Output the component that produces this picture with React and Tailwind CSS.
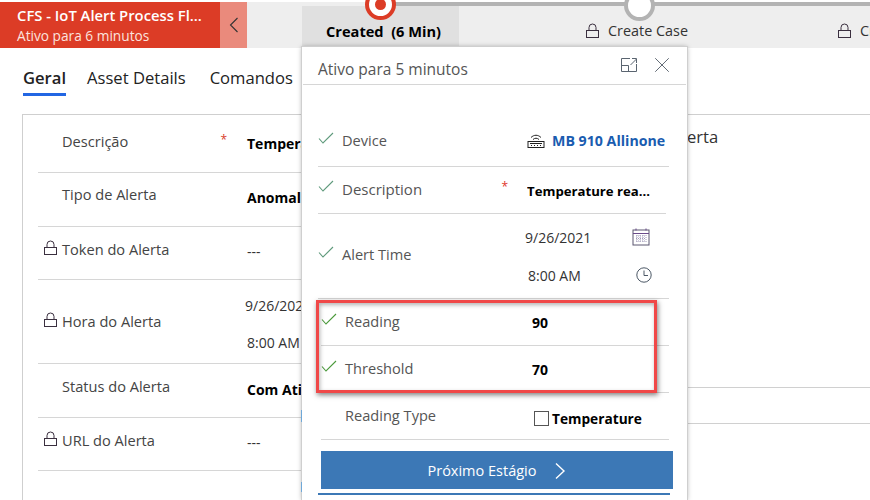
import { X } from 'lucide-react';

const FONT = "font-['Open_Sans','Noto_Sans',sans-serif]";

const LockIcon = ({ className = '' }) => (
  <svg viewBox="0 0 13 16" width="13" height="16" fill="none" stroke="#3a2f3f" strokeWidth="1" className={className}>
    <path d="M3 7.5V4.5a3.5 3.5 0 0 1 7 0V7.5" />
    <rect x="0.5" y="7.5" width="12" height="7" />
  </svg>
);

const CheckIcon = ({ color = '#5f9a7c' }) => (
  <svg viewBox="0 0 16 12" width="16" height="12" fill="none" stroke={color} strokeWidth="1.1">
    <path d="M1 6.5 5 11 15 1" />
  </svg>
);

const ExpandIcon = () => (
  <svg viewBox="0 0 16 14" width="16" height="14" fill="none" stroke="#5a6470" strokeWidth="1">
    <path d="M9 .5H.5v13h15V6M.5 7.5h7v6M9.5 7 15.5 1M11 .5h4.5V5" />
  </svg>
);

const RouterIcon = () => (
  <svg viewBox="0 0 18 16" width="18" height="16" fill="none" stroke="#222" strokeWidth="1">
    <path d="M4 4.5c3-3 7-3 10 0M6 6.5c2-1.7 4-1.7 6 0" />
    <rect x="1" y="8.5" width="16" height="6" />
    <path d="M3 10.5h12M4 12.5h1M7 12.5h1M10 12.5h1M13 12.5h1" />
  </svg>
);

const CalendarIcon = () => (
  <svg viewBox="0 0 18 18" width="18" height="18" fill="none" stroke="#5b5670" strokeWidth="1">
    <rect x="1" y="2" width="16" height="15" />
    <path d="M1 5.5h16M4 .5v2M14 .5v2" stroke="#6a4a8a" />
    <path d="M4 8h10M4 10.5h10M4 13h10M5 7v7M8 7v7M11 7v7M14 7v7" stroke="#a09ab8" strokeDasharray="1 1" />
  </svg>
);

const ClockIcon = () => (
  <svg viewBox="0 0 16 16" width="16" height="16" fill="none" stroke="#4c5866" strokeWidth="1">
    <circle cx="8" cy="8" r="7.2" />
    <path d="M8 3.5V8.5H12" />
  </svg>
);

const LeftRow = ({ label, locked, required, height, labelTop, valueTop, value, bold }) => (
  <div className={`flex border-b border-[#d6d6d6] ${height}`}>
    <div className={`flex w-[189px] shrink-0 text-[14.6px] text-[#444] ${labelTop}`}>
      <span className="flex w-[24px] pl-[6px] pt-[1px]">{locked && <LockIcon />}</span>
      <span>{label}</span>
      {required && <span className="ml-auto text-[12px] text-[#d83b2a]">*</span>}
    </div>
    <div className={`pl-[20px] text-[14px] whitespace-nowrap ${valueTop} ${bold ? 'font-bold text-black' : 'text-[#333]'}`}>{value}</div>
  </div>
);

const FlyoutRow = ({ label, labelSize = 'text-[14.6px]', checked, checkColor, required, children, height, labelWidth, className = '' }) => (
  <div className={`flex border-b border-[#d6d6d6] ${height} ${className}`}>
    <div className={`flex shrink-0 text-[#555] ${labelWidth} ${labelSize}`}>
      <span className="flex w-[24px] pt-[2px]">{checked && <CheckIcon color={checkColor} />}</span>
      <span>{label}</span>
      {required && <span className="ml-auto mr-[19px] text-[12px] text-[#e0352b]">*</span>}
    </div>
    <div className="min-w-0 flex-1">{children}</div>
  </div>
);

export default function App() {
  return (
    <div className={`relative h-[500px] w-[870px] overflow-hidden bg-white ${FONT}`}>
      {/* Process bar */}
      <div className="relative mt-[2px] flex h-[46px] bg-[#eeeeee]">
        <div className="flex w-[220px] shrink-0 flex-col bg-[#dc3c26] pl-[17px] pt-[1px] text-white">
          <span className="text-[14.8px] leading-[24px] font-semibold whitespace-nowrap">CFS - IoT Alert Process Fl...</span>
          <span className="text-[13.7px] leading-[17px] text-[#fbe3df]">Ativo para 6 minutos</span>
        </div>
        <div className="flex w-[27px] shrink-0 items-center justify-center bg-[#ea8a7c]">
          <svg viewBox="0 0 10 16" width="10" height="16" fill="none" stroke="#333" strokeWidth="1.1">
            <path d="M8.5 1 1.5 8l7 7" />
          </svg>
        </div>
        <div className="ml-[55px] mt-[4px] flex w-[157px] shrink-0 items-center justify-center bg-[#e0e0e0] pl-[6px] pt-[9px] text-[14.6px] font-bold text-black whitespace-pre">
          Created  (6 Min)
        </div>
        <div className="ml-[127px] flex shrink-0 items-center gap-[9px] pt-[12px] text-[14.4px] text-[#333]">
          <LockIcon />
          <span>Create Case</span>
        </div>
        <div className="ml-[150px] flex shrink-0 items-center gap-[9px] pt-[12px] text-[14.4px] text-[#333]">
          <LockIcon />
          <span>Cr</span>
        </div>
      </div>
      <div className="absolute left-[380px] right-0 top-[2px] h-[4px] bg-[#b3b3b3]" />
      <div className="absolute left-[365px] top-[-11px] flex h-[31px] w-[31px] items-center justify-center rounded-full border-[4px] border-[#dc3c26] bg-white">
        <div className="h-[11px] w-[11px] rounded-full bg-[#dc3c26]" />
      </div>
      <div className="absolute left-[624px] top-[-10px] h-[31px] w-[31px] rounded-full border-[4px] border-[#b3b3b3] bg-white" />

      {/* Tabs */}
      <div className="flex gap-[21px] pl-[23px] pt-[18px] text-[16.6px] text-[#222]">
        <span className="border-b-[3px] border-[#2266e3] pb-[3px] leading-[24px] font-semibold">Geral</span>
        <span className="leading-[24px]">Asset Details</span>
        <span className="ml-[3px] leading-[24px]">Comandos</span>
      </div>

      {/* Main form */}
      <div className="ml-[22px] mt-[18px] h-[386px] border-l border-t border-[#cfcfcf] pl-[15px] pt-[9px]">
        <div className="w-[265px]">
          <LeftRow label="Descrição" required height="h-[49px]" labelTop="pt-[7px]" valueTop="pt-[9px]" value="Tempera" bold />
          <LeftRow label="Tipo de Alerta" height="h-[54px]" labelTop="pt-[11px]" valueTop="pt-[14px]" value="Anomali" bold />
          <LeftRow label="Token do Alerta" locked height="h-[53px]" labelTop="pt-[12px]" valueTop="pt-[14px]" value="---" />
          <div className="flex h-[84px] border-b border-[#d6d6d6]">
            <div className="flex w-[189px] shrink-0 items-center text-[14.6px] text-[#444]">
              <span className="-mt-[4px] flex w-[24px] pl-[6px]"><LockIcon /></span>
              <span>Hora do Alerta</span>
            </div>
            <div className="flex flex-col gap-[16px] pl-[20px] pt-[15px] text-[14px] text-[#333] whitespace-nowrap">
              <span className="-ml-[2px]">9/26/2021</span>
              <span>8:00 AM</span>
            </div>
          </div>
          <LeftRow label="Status do Alerta" height="h-[54px]" labelTop="pt-[12px]" valueTop="pt-[15px]" value="Com Ativ" bold />
          <LeftRow label="URL do Alerta" locked height="h-[53px]" labelTop="pt-[12px]" valueTop="pt-[14px]" value="---" />
        </div>
      </div>

      {/* Text and rules behind the flyout, on the right */}
      <span className="absolute left-[687px] top-[125px] text-[16.6px] text-[#333]">erta</span>
      <div className="absolute left-[687px] right-0 top-[387px] h-px bg-[#d0d0d0]" />
      <div className="absolute left-[687px] right-0 top-[423px] h-px bg-[#d0d0d0]" />

      {/* Stage flyout */}
      <div className="absolute left-[302px] top-[47px] h-[453px] w-[385px] bg-white shadow-[0_0_0_1px_#cfcfcf,0_0_5px_rgba(0,0,0,0.35)]">
        <div className="absolute left-[-1px] top-[363px] h-[12px] w-px bg-[#6fa8d8]" />
        <div className="absolute left-[-1px] top-[435px] h-[10px] w-px bg-[#6fa8d8]" />
        <div className="mx-px flex h-[38px] justify-between border-b border-[#d6d6d6] pl-[15px] pr-[11px] pt-[10px] text-[15.5px] text-[#555]">
          <span className="leading-[24px]">Ativo para 5 minutos</span>
          <span className="-mt-[5px] flex h-[26px] items-center gap-[12px]">
            <ExpandIcon />
            <X size={26} strokeWidth={0.8} color="#4a5560" />
          </span>
        </div>
        <div className="ml-[16px] mr-[18px] flex flex-col">
          <FlyoutRow label="Device" checked labelWidth="w-[209px]" height="h-[82px] pt-[45px]">
            <div className="flex items-center gap-[7px] text-[14.2px] font-bold whitespace-nowrap text-[#1a5cb0]">
              <RouterIcon />
              <span>MB 910 Allinone</span>
            </div>
          </FlyoutRow>
          <FlyoutRow label="Description" labelSize="text-[15px]" checked required labelWidth="w-[209px]" height="h-[47px] pt-[11px]" className="mr-[3px]">
            <div className="truncate pt-[4px] text-[13.2px] font-bold text-black">Temperature rea...</div>
          </FlyoutRow>
          <FlyoutRow label="Alert Time" checked labelWidth="w-[209px]" height="h-[85px] pt-[30px]">
            <div className="-ml-[2px] -mt-[18px] flex flex-col gap-[17px] text-[14px] text-[#333]">
              <div className="flex h-[21px] items-center justify-between pr-[19px]"><span className="pt-[1px]">9/26/2021</span><CalendarIcon /></div>
              <div className="flex h-[21px] items-center justify-between pl-[3px] pr-[17px]"><span className="pt-[1px]">8:00 AM</span><ClockIcon /></div>
            </div>
          </FlyoutRow>
        </div>
        <div className="ml-[19px] mr-[18px] flex flex-col">
          <FlyoutRow label="Reading" checked checkColor="#4c9a3c" labelWidth="w-[211px]" height="h-[47px] pt-[12px]">
            <div className="pt-[1px] text-[14px] font-bold text-black">90</div>
          </FlyoutRow>
          <FlyoutRow label="Threshold" checked checkColor="#4c9a3c" labelWidth="w-[211px]" height="h-[47px] pt-[12px]">
            <div className="pt-[1px] text-[14px] font-bold text-black">70</div>
          </FlyoutRow>
          <FlyoutRow label="Reading Type" labelWidth="w-[213px]" height="h-[47px] pt-[12px]">
            <div className="flex items-center gap-[3px] pt-[4px] text-[13.7px] font-bold text-black whitespace-nowrap">
              <span className="-mt-[2px] h-[15px] w-[15px] shrink-0 border border-[#555]" />
              <span>Temperature</span>
            </div>
          </FlyoutRow>
          <button className="mt-[11px] flex h-[38px] w-[352px] items-center justify-center gap-[18px] bg-[#3c78b6] pt-[2px] text-[14.5px] text-white">
            <span>Próximo Estágio</span>
            <svg viewBox="0 0 12 18" width="12" height="18" fill="none" stroke="#fff" strokeWidth="1.4">
              <path d="M2 1.5 10 9l-8 7.5" />
            </svg>
          </button>
          <div className="-ml-[3px] mt-[4px] h-[2px] w-[352px] bg-[#3c78b6]" />
        </div>
        {/* Highlight annotation */}
        <div className="absolute left-[14px] top-[253px] h-[93px] w-[341px] border-[3px] border-[#f04848] shadow-[1px_2px_5px_rgba(0,0,0,0.5),inset_1px_2px_4px_rgba(0,0,0,0.3)]" />
      </div>
    </div>
  );
}
